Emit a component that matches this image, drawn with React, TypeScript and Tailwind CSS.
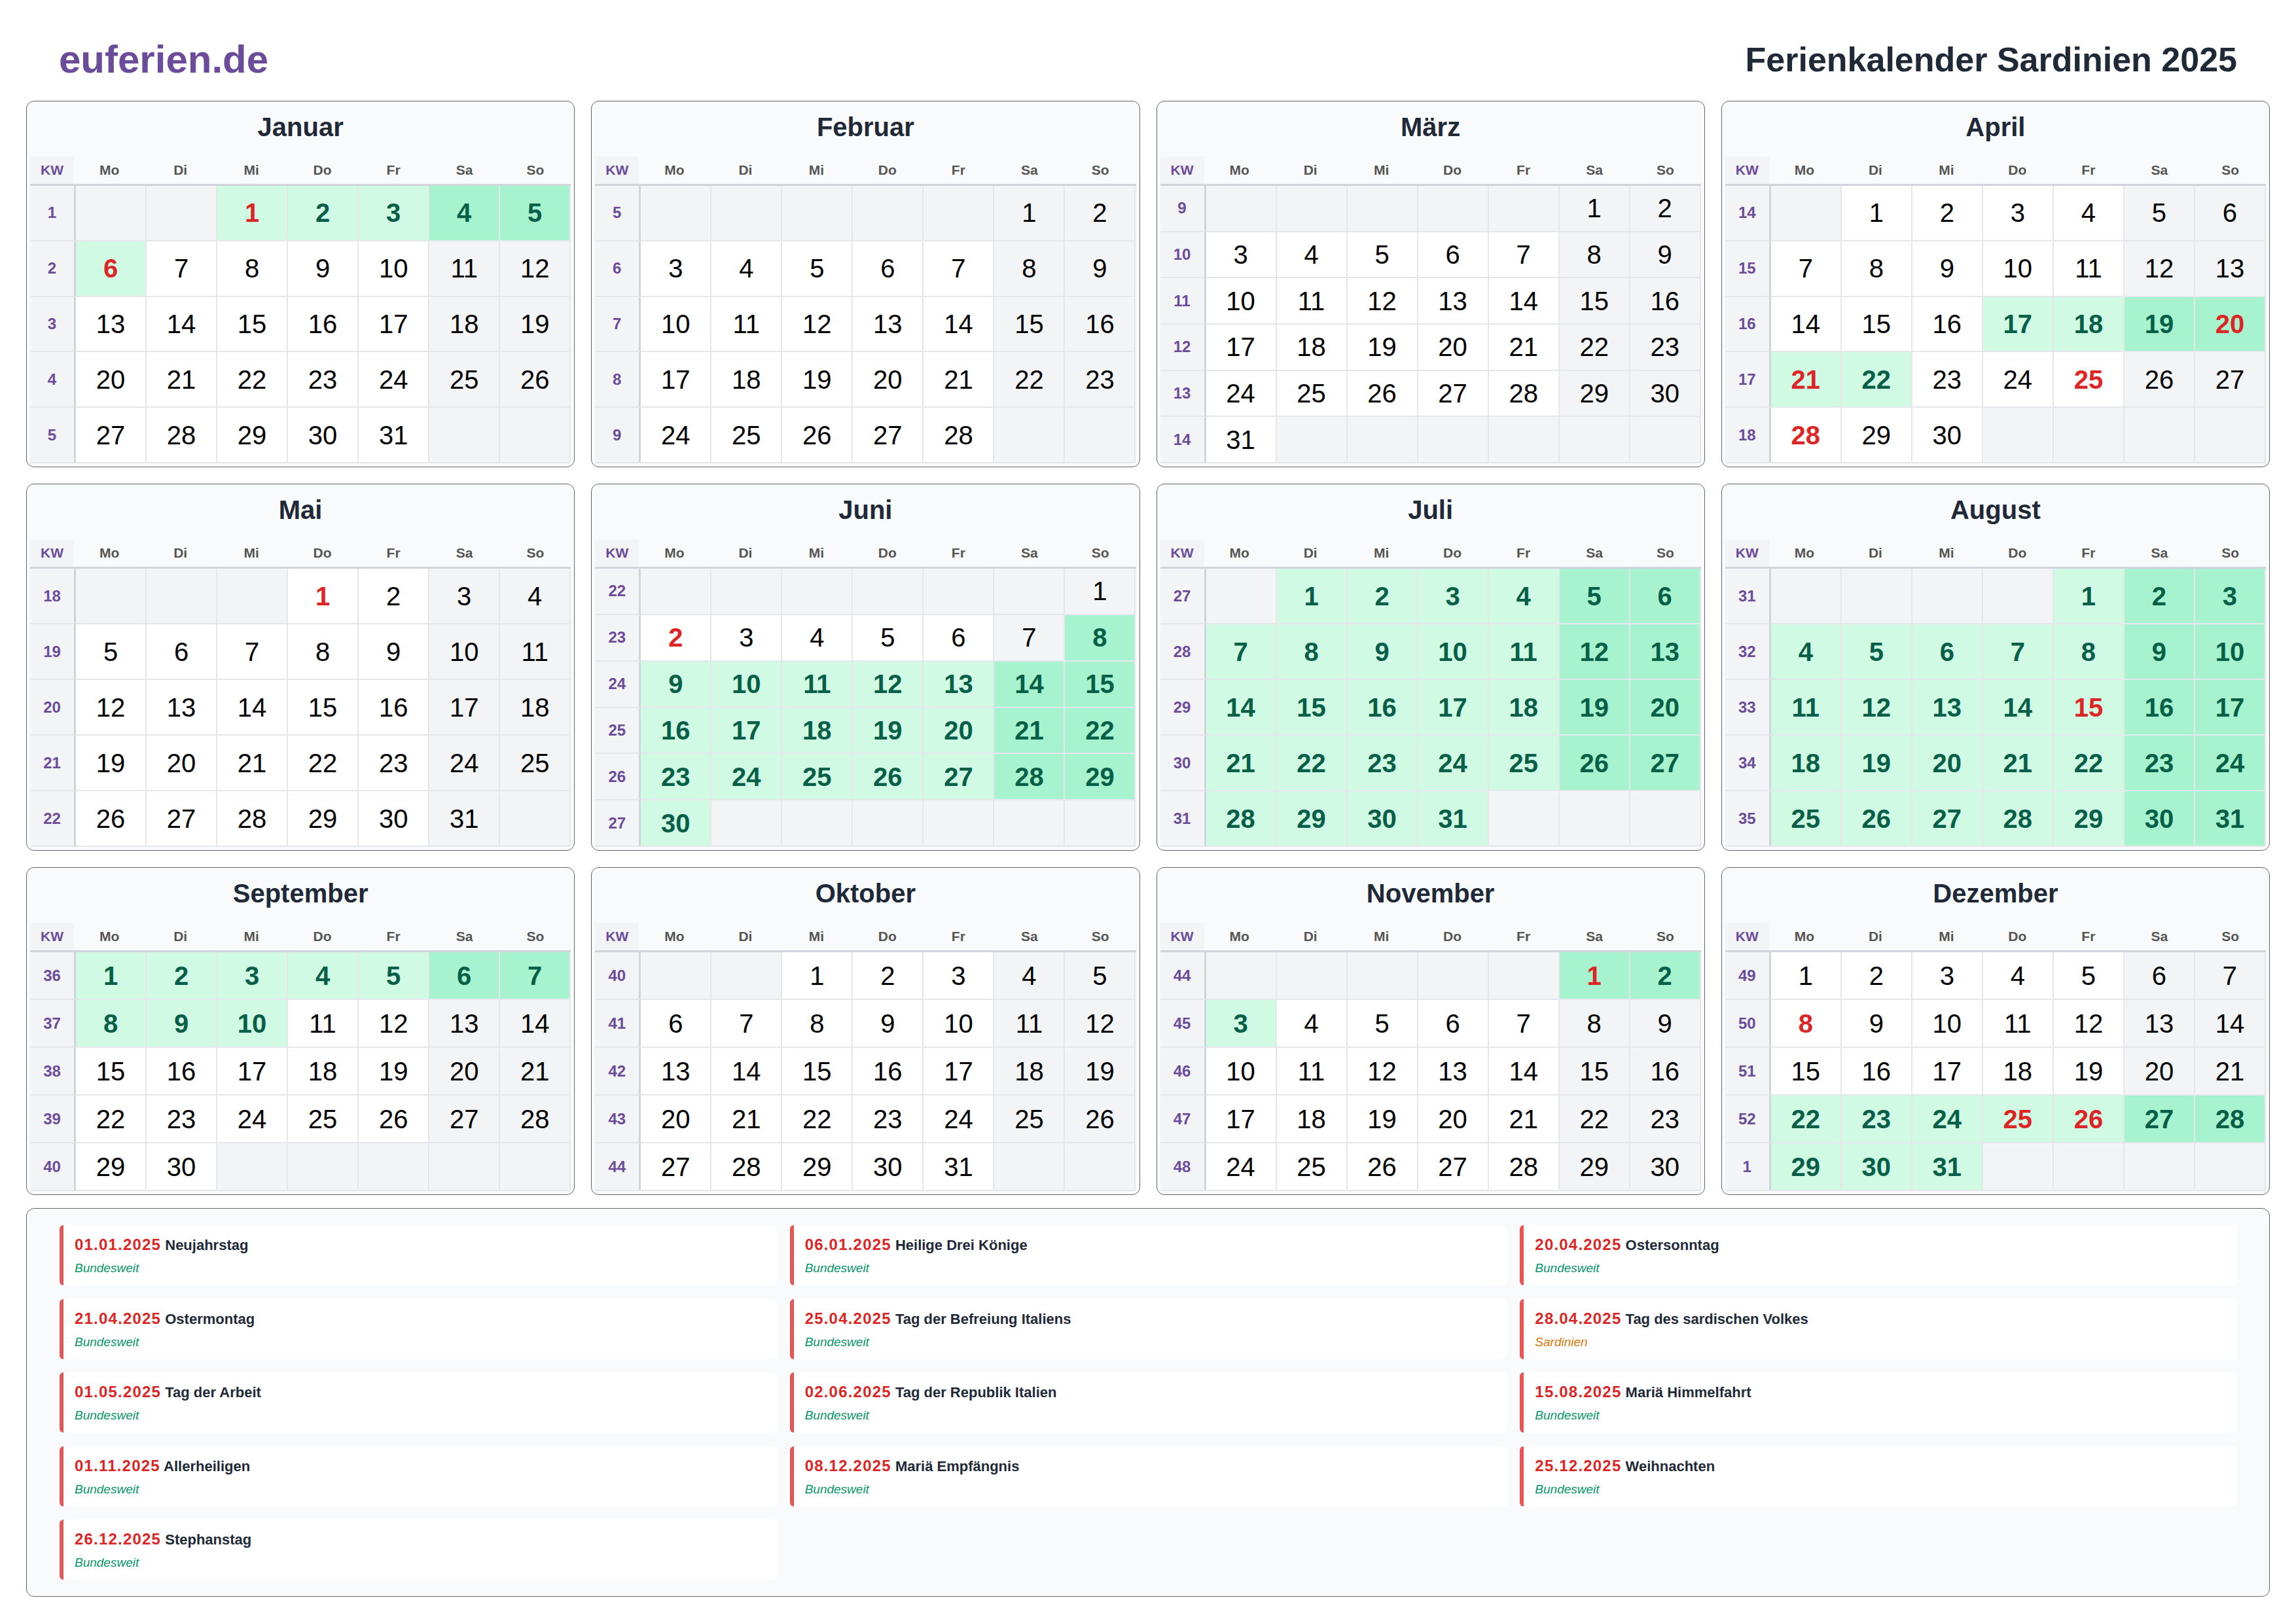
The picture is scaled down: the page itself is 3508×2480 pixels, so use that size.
const FONT_NOTE = 'Liberation Sans';

type Month = { name: string; offset: number; days: number; kw: number; ferien: [number, number][]; red: number[] };

const months: Month[] = [
  { name: 'Januar', offset: 2, days: 31, kw: 1, ferien: [[1, 6]], red: [1, 6] },
  { name: 'Februar', offset: 5, days: 28, kw: 5, ferien: [], red: [] },
  { name: 'März', offset: 5, days: 31, kw: 9, ferien: [], red: [] },
  { name: 'April', offset: 1, days: 30, kw: 14, ferien: [[17, 22]], red: [20, 21, 25, 28] },
  { name: 'Mai', offset: 3, days: 31, kw: 18, ferien: [], red: [1] },
  { name: 'Juni', offset: 6, days: 30, kw: 22, ferien: [[8, 30]], red: [2] },
  { name: 'Juli', offset: 1, days: 31, kw: 27, ferien: [[1, 31]], red: [] },
  { name: 'August', offset: 4, days: 31, kw: 31, ferien: [[1, 31]], red: [15] },
  { name: 'September', offset: 0, days: 30, kw: 36, ferien: [[1, 10]], red: [] },
  { name: 'Oktober', offset: 2, days: 31, kw: 40, ferien: [], red: [] },
  { name: 'November', offset: 5, days: 30, kw: 44, ferien: [[1, 3]], red: [1] },
  { name: 'Dezember', offset: 0, days: 31, kw: 49, ferien: [[22, 31]], red: [8, 25, 26] },
];

const holidays = [
  ['01.01.2025', 'Neujahrstag', 'Bundesweit'],
  ['06.01.2025', 'Heilige Drei Könige', 'Bundesweit'],
  ['20.04.2025', 'Ostersonntag', 'Bundesweit'],
  ['21.04.2025', 'Ostermontag', 'Bundesweit'],
  ['25.04.2025', 'Tag der Befreiung Italiens', 'Bundesweit'],
  ['28.04.2025', 'Tag des sardischen Volkes', 'Sardinien'],
  ['01.05.2025', 'Tag der Arbeit', 'Bundesweit'],
  ['02.06.2025', 'Tag der Republik Italien', 'Bundesweit'],
  ['15.08.2025', 'Mariä Himmelfahrt', 'Bundesweit'],
  ['01.11.2025', 'Allerheiligen', 'Bundesweit'],
  ['08.12.2025', 'Mariä Empfängnis', 'Bundesweit'],
  ['25.12.2025', 'Weihnachten', 'Bundesweit'],
  ['26.12.2025', 'Stephanstag', 'Bundesweit'],
];

const weekdays = ['Mo', 'Di', 'Mi', 'Do', 'Fr', 'Sa', 'So'];

const DayCell = ({ month, day, col }: { month: Month; day: number | null; col: number }) => {
  const weekend = col >= 5;
  const ferien = day !== null && month.ferien.some(([a, b]) => day >= a && day <= b);
  const red = day !== null && month.red.includes(day);

  let bg = weekend || day === null ? 'bg-[#f3f4f6]' : 'bg-white';
  if (ferien) bg = weekend ? 'bg-[#a7f3d0]' : 'bg-[#d1fae5]';

  let text = 'text-black font-normal';
  if (ferien) text = 'text-[#065f46] font-bold';
  if (red) text = 'text-[#dc2626] font-bold';

  return (
    <div className={`flex items-center justify-center border-r-2 border-b-2 border-[#e5e7eb] text-[40px] leading-none ${bg} ${text}`}>
      {day}
    </div>
  );
};

const MonthCard = ({ month }: { month: Month }) => {
  const cells: (number | null)[] = [];
  for (let i = 0; i < month.offset; i++) cells.push(null);
  for (let d = 1; d <= month.days; d++) cells.push(d);
  while (cells.length % 7 !== 0) cells.push(null);

  const weeks: (number | null)[][] = [];
  for (let i = 0; i < cells.length; i += 7) weeks.push(cells.slice(i, i + 7));

  return (
    <div className="flex flex-col rounded-xl border border-[#666] bg-[#f9fafb] p-[5px]">
      <div className="h-[79px] pt-[11px] text-center text-[40px] leading-[46px] font-bold text-[#1f2937]">{month.name}</div>

      {/* Weekday header */}
      <div className="grid h-[45px] shrink-0 grid-cols-[67px_repeat(7,1fr)] border-b-[3px] border-[#d1d5db] text-[21px] font-bold text-[#555]">
        <div className="flex items-center justify-center bg-[#f3f4f6] text-[#6b4c9a]">KW</div>
        {weekdays.map((w) => (
          <div key={w} className="flex items-center justify-center">{w}</div>
        ))}
      </div>

      {/* Weeks */}
      <div className={`grid min-h-0 flex-1 grid-cols-[70px_repeat(7,1fr)] ${weeks.length === 6 ? 'grid-rows-6' : 'grid-rows-5'}`}>
        {weeks.map((week, i) => {
          const kw = month.kw + i > 52 ? month.kw + i - 52 : month.kw + i;
          return [
            <div key={`kw-${i}`} className="flex items-center justify-center border-r-[3px] border-b-2 border-r-[#d1d5db] border-b-[#e5e7eb] bg-[#f3f4f6] text-[24px] font-bold text-[#6b4c9a]">
              {kw}
            </div>,
            ...week.map((day, col) => <DayCell key={`${i}-${col}`} month={month} day={day} col={col} />),
          ];
        })}
      </div>
    </div>
  );
};

export default function App() {
  return (
    <div className="h-[2480px] w-[3508px] overflow-hidden bg-white px-10 text-black" style={{ fontFamily: `"${FONT_NOTE}", Arial, sans-serif` }}>
      <header className="flex h-[154px] items-center justify-between px-[50px] pt-7">
        <div className="text-[60px] font-bold text-[#6b4c9a]">euferien.de</div>
        <h1 className="text-[52px] font-bold text-[#1f2937]">Ferienkalender Sardinien 2025</h1>
      </header>

      <div className="grid grid-cols-4 grid-rows-[560px_561px_501px] gap-[25px]">
        {months.map((m) => (
          <MonthCard key={m.name} month={m} />
        ))}
      </div>

      <div className="mt-5 grid grid-cols-3 gap-x-5 gap-y-[20.5px] rounded-xl border border-[#666] bg-[#f9fafb] py-[25px] pr-[49px] pl-[50px]">
        {holidays.map(([date, name, region]) => (
          <div key={date} className="h-[92px] rounded-md border-l-[6px] border-[#e85555] bg-white pt-3 pl-[17px]">
            <div className="text-[22px] leading-[35px] font-bold text-[#1f2937]">
              <span className="text-[24px] tracking-[1.2px] text-[#dc2626]">{date}</span> {name}
            </div>
            <div className={`mt-[3px] text-[19px] leading-[30px] italic ${region === 'Sardinien' ? 'text-[#d97706]' : 'text-[#059669]'}`}>{region}</div>
          </div>
        ))}
      </div>
    </div>
  );
}
